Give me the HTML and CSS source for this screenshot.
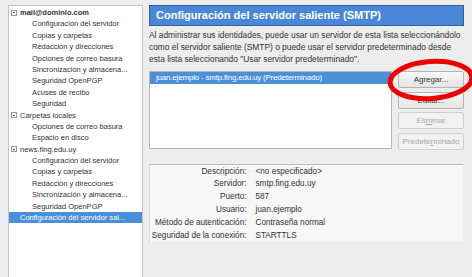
FILE: index.html
```html
<!DOCTYPE html>
<html lang="es">
<head>
    <meta charset="UTF-8">
    <title>Configuración de cuentas</title>
    <link rel="stylesheet" href="styles.css">
</head>
<body>
    <div class="window">
        <div class="tree">
            <div class="node top"><span class="expander"></span><b>mail@dominio.com</b></div>
            <div class="node child">Configuración del servidor</div>
            <div class="node child">Copias y carpetas</div>
            <div class="node child">Redacción y direcciones</div>
            <div class="node child">Opciones de correo basura</div>
            <div class="node child">Sincronización y almacena...</div>
            <div class="node child">Seguridad OpenPGP</div>
            <div class="node child">Acuses de recibo</div>
            <div class="node child">Seguridad</div>
            <div class="node top"><span class="expander"></span>Carpetas locales</div>
            <div class="node child">Opciones de correo basura</div>
            <div class="node child">Espacio en disco</div>
            <div class="node top"><span class="expander"></span>news.fing.edu.uy</div>
            <div class="node child">Configuración del servidor</div>
            <div class="node child">Copias y carpetas</div>
            <div class="node child">Redacción y direcciones</div>
            <div class="node child">Sincronización y almacena...</div>
            <div class="node child">Seguridad OpenPGP</div>
            <div class="node top selected">Configuración del servidor sal...</div>
        </div>

        <div class="content">
            <div class="page-title">Configuración del servidor saliente (SMTP)</div>
            <p class="intro">Al administrar sus identidades, puede usar un servidor de esta lista seleccionándolo como el servidor saliente (SMTP) o puede usar el servidor predeterminado desde esta lista seleccionando "Usar servidor predeterminado".</p>

            <div class="servers">
                <div class="server-list">
                    <div class="server-row selected">juan.ejemplo - smtp.fing.edu.uy (Predeterminado)</div>
                </div>
                <div class="buttons">
                    <button class="btn">Agregar...</button>
                    <button class="btn">Editar...</button>
                    <button class="btn" disabled>Eli<u>m</u>inar</button>
                    <button class="btn" disabled>Predete<u>r</u>minado</button>
                </div>
            </div>

            <table class="details">
                <tr><td class="label">Descripción:</td><td>&lt;no especificado&gt;</td></tr>
                <tr><td class="label">Servidor:</td><td>smtp.fing.edu.uy</td></tr>
                <tr><td class="label">Puerto:</td><td>587</td></tr>
                <tr><td class="label">Usuario:</td><td>juan.ejemplo</td></tr>
                <tr><td class="label">Método de autenticación:</td><td>Contraseña normal</td></tr>
                <tr><td class="label">Seguridad de la conexión:</td><td>STARTTLS</td></tr>
            </table>
        </div>

        <!-- annotation drawn on top of the screenshot -->
        <svg class="highlight" width="100" height="56" viewBox="0 0 100 56">
            <ellipse cx="50" cy="27" rx="41" ry="18.5" fill="none" stroke="#ee0000" stroke-width="5" transform="rotate(-4 50 27)"/>
        </svg>
    </div>
</body>
</html>
```

FILE: styles.css
```css
* {
    margin: 0;
    padding: 0;
    box-sizing: border-box;
}

body {
    background: #ededed;
    font-family: 'Liberation Sans', Arial, sans-serif;
    font-size: 7.5px;
    color: #2e3436;
    width: 472px;
    height: 277px;
    overflow: hidden;
}

.window {
    position: relative;
    display: flex;
    height: 277px;
    padding: 5px 0 0 8px;
}

/* account tree */
.tree {
    width: 135px;
    flex-shrink: 0;
    background: #fff;
    border: 1px solid #c4c4c4;
    border-bottom: none;
    padding-top: 1px;
}

.node {
    height: 11.4px;
    line-height: 11.4px;
    white-space: nowrap;
    overflow: hidden;
}

.node.top {
    padding-left: 2px;
    display: flex;
    align-items: center;
}

.node.child {
    padding-left: 23px;
}

.node.selected {
    background: #4a90d9;
    color: #fff;
    padding-left: 11px;
}

.expander {
    width: 6px;
    height: 6px;
    border: 1px solid #9a9a9a;
    margin-right: 3px;
    position: relative;
    flex-shrink: 0;
}

.expander::after {
    content: '';
    position: absolute;
    left: 1px;
    right: 1px;
    top: 1.5px;
    height: 1px;
    background: #555;
}

/* right side */
.content {
    flex: 1;
    padding: 0 10px 0 6px;
    font-size: 8.2px;
}

.page-title {
    background: #4a87d8;
    border: 1px solid #30609e;
    color: #fff;
    font-weight: bold;
    font-size: 11px;
    height: 21px;
    line-height: 19px;
    padding-left: 6px;
    white-space: nowrap;
}

.intro {
    margin: 4px -4px 0 0;
    font-size: 8.4px;
    line-height: 11.8px;
}

.servers {
    display: flex;
    margin-top: 6px;
}

.server-list {
    width: 243px;
    height: 78px;
    background: #fff;
    border: 1px solid #b8b8b8;
}

.server-row {
    height: 12px;
    line-height: 12px;
    padding-left: 6px;
    font-size: 8px;
    letter-spacing: -0.2px;
}

.server-row.selected {
    background: #4a90d9;
    color: #fff;
}

.buttons {
    display: flex;
    flex-direction: column;
    gap: 3.5px;
    margin-left: 6px;
}

.btn {
    width: 66px;
    height: 17px;
    font-family: inherit;
    font-size: 8px;
    color: #2e3436;
    background: linear-gradient(#f8f8f8, #e4e4e4);
    border: 1px solid #b4b4b4;
    border-radius: 2px;
}

.btn:disabled {
    color: #a9a9a9;
    background: #f2f2f2;
    border-color: #cfcfcf;
}

.details {
    margin-top: 14px;
    width: 314px;
    height: 78px;
    background: #f7f7f7;
    border-top: 1px solid #bcbcbc;
    border-left: 1px solid #dcdcdc;
    border-collapse: collapse;
}

.details td {
    height: 12.8px;
    padding: 0;
    white-space: nowrap;
}

.details td.label {
    width: 106px;
    text-align: right;
    padding-right: 9px;
}

.highlight {
    position: absolute;
    left: 381px;
    top: 53px;
}
```
